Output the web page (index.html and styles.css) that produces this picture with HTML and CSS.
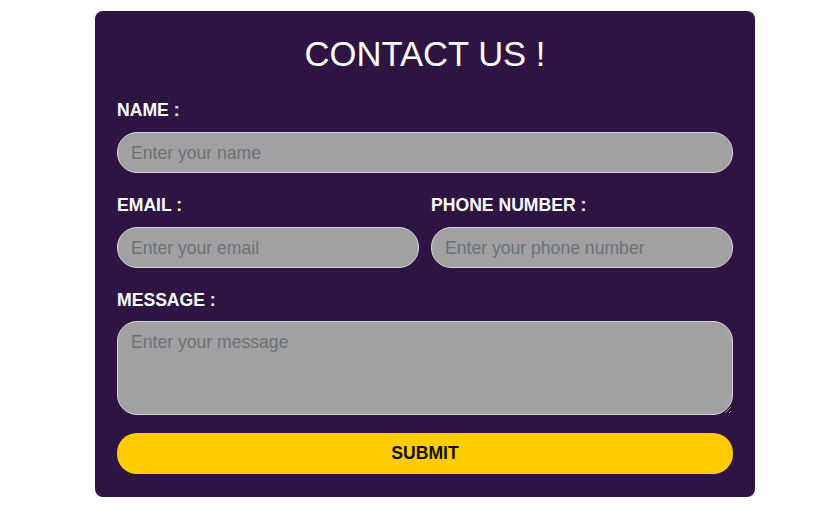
FILE: index.html
```html
<!DOCTYPE html>
<html lang="en">
<head>
<meta charset="utf-8">
<title>Contact Us</title>
<link rel="stylesheet" href="styles.css">
</head>
<body>
<form class="card">
  <h2 class="title">CONTACT US !</h2>
  <div class="group">
    <label class="label" for="name">NAME :</label>
    <input class="field" id="name" type="text" placeholder="Enter your name">
  </div>
  <div class="row">
    <div class="group">
      <label class="label" for="email">EMAIL :</label>
      <input class="field" id="email" type="email" placeholder="Enter your email">
    </div>
    <div class="group">
      <label class="label" for="phone">PHONE NUMBER :</label>
      <input class="field" id="phone" type="tel" placeholder="Enter your phone number">
    </div>
  </div>
  <div class="group group-msg">
    <label class="label label-msg" for="msg">MESSAGE :</label>
    <textarea class="field area" id="msg" placeholder="Enter your message"></textarea>
  </div>
  <button class="submit" type="button">SUBMIT</button>
</form>
</body>
</html>
```

FILE: styles.css
```css
* { box-sizing: border-box; }
html, body { margin: 0; padding: 0; background: #ffffff; }
body {
  font-family: "Liberation Sans", Arial, sans-serif;
  font-size: 16px;
}
.card {
  width: 660px;
  margin: 11px 0 0 95px;
  padding: 22px 22px 23px;
  background: #2d1443;
  border-radius: 8px;
  display: flex;
  flex-direction: column;
}
.title {
  margin: 2px 0 26px;
  font-size: 34.6px;
  font-weight: normal;
  line-height: normal;
  color: #ffffff;
  text-align: center;
}
.group {
  display: flex;
  flex-direction: column;
  margin-bottom: 22px;
}
.row {
  display: grid;
  grid-template-columns: 1fr 1fr;
  column-gap: 12px;
}
.label {
  display: block;
  color: #ffffff;
  font-weight: bold;
  font-size: 17.6px;
  line-height: normal;
  margin-bottom: 11px;
}
.label-msg { margin-bottom: 10px; }
.field {
  display: block;
  width: 100%;
  height: 41px;
  margin: 0;
  padding: 1px 13px 0;
  border: 1px solid #d4d4d4;
  border-radius: 20px;
  background: #a1a1a1;
  font-family: "Liberation Sans", Arial, sans-serif;
  font-size: 17.6px;
  color: #222;
  outline: none;
}
.field::placeholder { color: #6b7279; opacity: 1; }
.group-msg { margin-bottom: 18px; }
.area {
  height: 94px;
  padding: 10px 13px;
  resize: vertical;
}
.submit {
  display: block;
  width: 100%;
  height: 41px;
  border: none;
  border-radius: 20px;
  background: #ffcc00;
  color: #111111;
  font-family: "Liberation Sans", Arial, sans-serif;
  font-size: 17.6px;
  font-weight: bold;
  cursor: pointer;
}
```
